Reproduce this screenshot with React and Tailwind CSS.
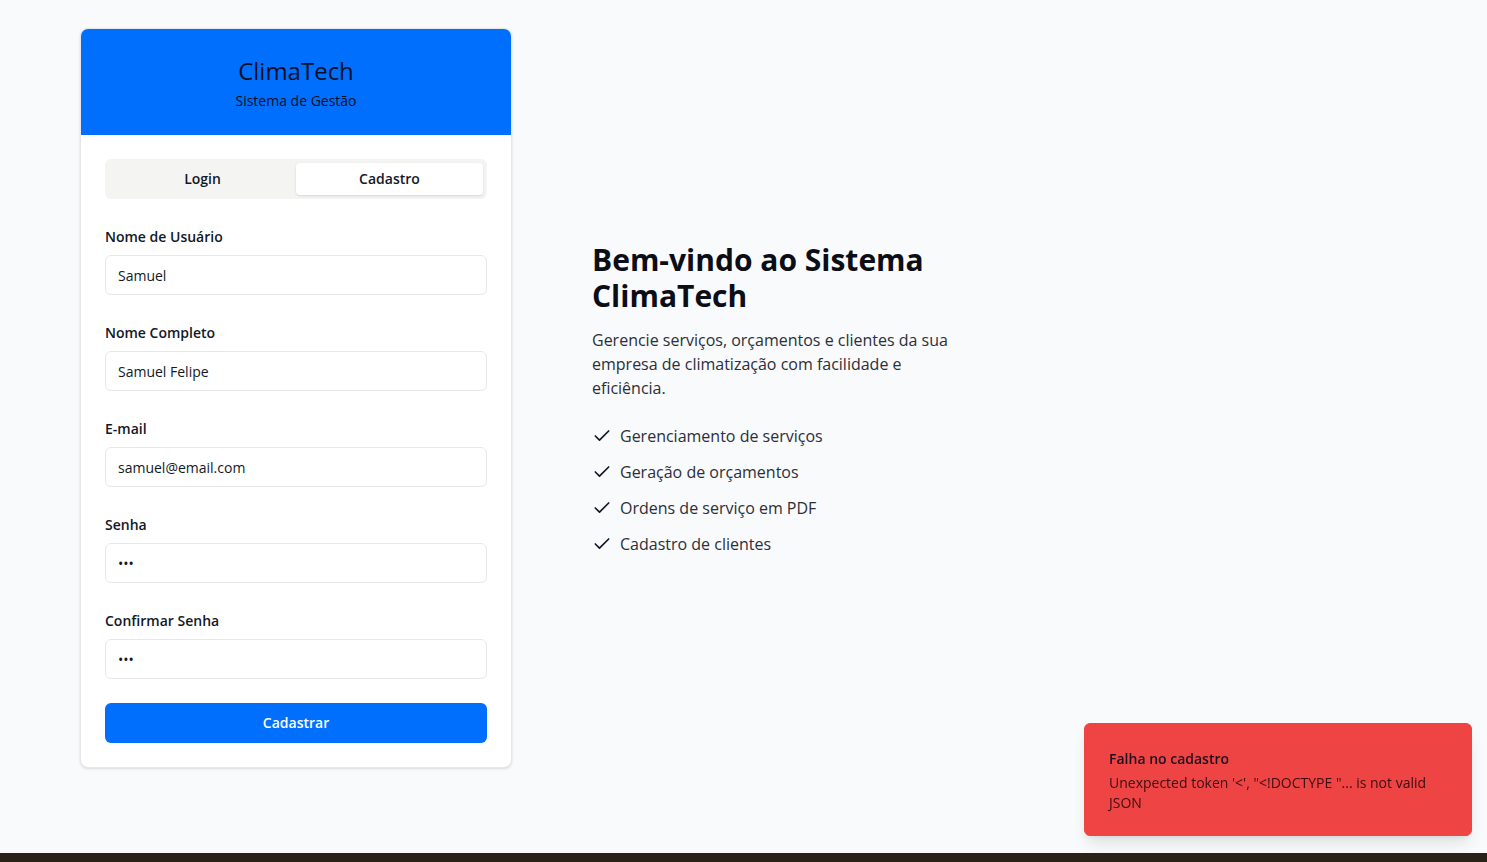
import { Check } from "lucide-react";

const fields = [
  { label: "Nome de Usuário", value: "Samuel", type: "text" },
  { label: "Nome Completo", value: "Samuel Felipe", type: "text" },
  { label: "E-mail", value: "samuel@email.com", type: "email" },
  { label: "Senha", value: "123", type: "password" },
  { label: "Confirmar Senha", value: "123", type: "password" },
];

const features = [
  "Gerenciamento de serviços",
  "Geração de orçamentos",
  "Ordens de serviço em PDF",
  "Cadastro de clientes",
];

function App() {
  return (
    <div
      className="min-h-screen bg-[#f9fafb] text-[#0b0d17]"
      style={{ fontFamily: '"Open Sans", "Noto Sans", sans-serif' }}
    >
      <div className="flex items-center gap-[80px] pl-[80px] pt-[28px]">
        {/* card */}
        <div className="w-[432px] overflow-hidden rounded-lg border border-[#e5e7eb] bg-white shadow-sm">
          <div className="bg-[#006ffd] pt-[26px] pb-6 text-center">
            <h1 className="text-2xl font-medium text-[#0a0f24]">ClimaTech</h1>
            <p className="mt-1 text-sm text-[#0a0f24]">Sistema de Gestão</p>
          </div>

          <div className="p-6">
            <div className="grid h-10 grid-cols-2 rounded-md bg-[#f4f4f3] p-1">
              <button className="rounded-sm text-sm font-semibold text-[#111827]">
                Login
              </button>
              <button className="rounded-sm bg-white text-sm font-semibold text-[#111827] shadow-sm">
                Cadastro
              </button>
            </div>

            <form className="mt-7 flex flex-col gap-7">
              {fields.map((f) => (
                <div key={f.label} className="flex flex-col gap-2">
                  <label className="text-sm leading-5 font-semibold text-[#111827]">
                    {f.label}
                  </label>
                  <input
                    type={f.type}
                    defaultValue={f.value}
                    readOnly
                    className="h-10 w-full rounded-md border border-[#e5e7eb] bg-white px-3 text-sm text-[#111827] outline-none"
                  />
                </div>
              ))}
              <button
                type="button"
                className="-mt-1 h-10 w-full rounded-md bg-[#006ffd] text-sm font-semibold text-white"
              >
                Cadastrar
              </button>
            </form>
          </div>
        </div>

        {/* right side */}
        <div className="w-[384px]">
          <h2 className="pt-[2px] text-3xl leading-9 font-bold text-[#0b0d17]">
            Bem-vindo ao Sistema ClimaTech
          </h2>
          <p className="mt-[14px] text-base leading-6 text-[#2b2f3a]">
            Gerencie serviços, orçamentos e clientes da sua empresa de
            climatização com facilidade e eficiência.
          </p>
          <ul className="mt-6 flex flex-col gap-3">
            {features.map((item) => (
              <li key={item} className="flex items-center gap-2 text-base leading-6 text-[#2b2f3a]">
                <Check size={20} strokeWidth={2} className="text-[#111827]" />
                {item}
              </li>
            ))}
          </ul>
        </div>
      </div>

      {/* toast */}
      <div className="fixed right-[15px] bottom-[26px] w-[388px] rounded-md border border-[#ef4444] bg-[#ef4444] pt-[25px] pr-6 pb-[22px] pl-6 shadow-lg">
        <p className="text-sm leading-5 font-semibold text-[#1a1020]">Falha no cadastro</p>
        <p className="mt-1 text-sm leading-5 text-[#3a0d12]">
          Unexpected token '&lt;', "&lt;!DOCTYPE "... is not valid JSON
        </p>
      </div>

      {/* taskbar strip */}
      <div className="fixed right-0 bottom-0 left-0 h-[9px] bg-[#2a2118]" />
    </div>
  );
}

export default App;
